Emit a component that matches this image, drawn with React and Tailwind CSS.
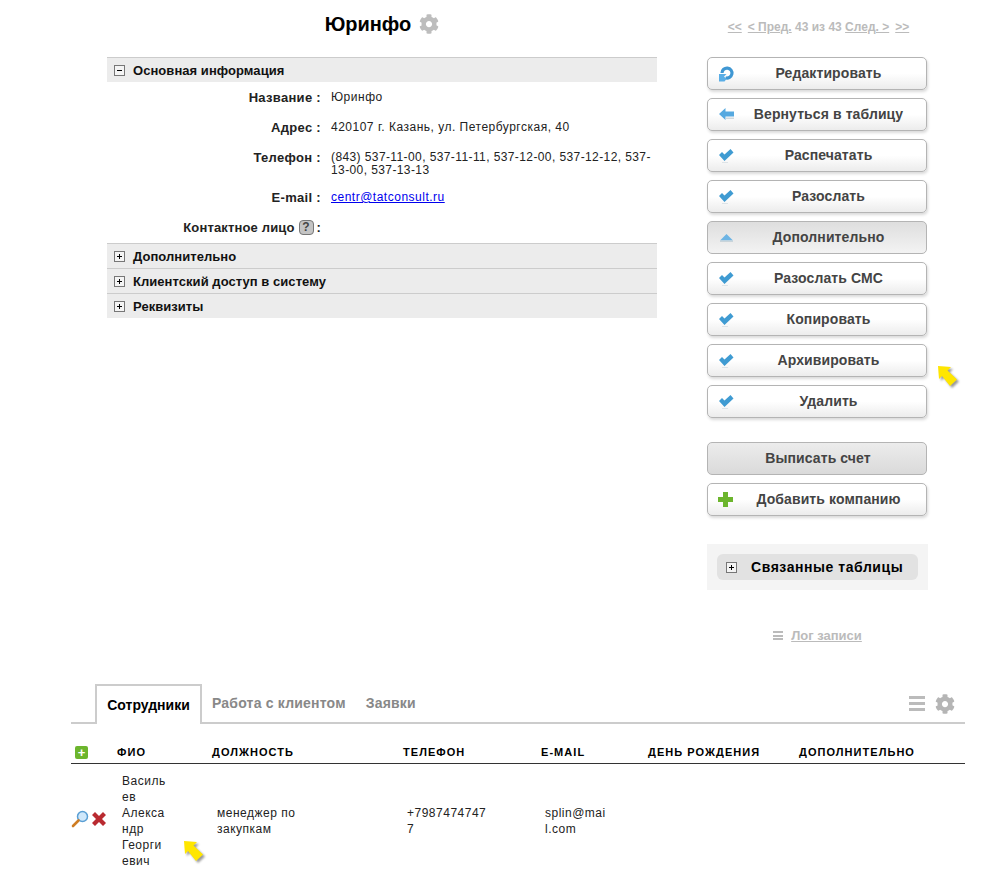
import React from "react";
import { FaCog } from "react-icons/fa";

const sections = ["Дополнительно", "Клиентский доступ в систему", "Реквизиты"];

const actions = [
  { label: "Редактировать", icon: "refresh" },
  { label: "Вернуться в таблицу", icon: "back" },
  { label: "Распечатать", icon: "check" },
  { label: "Разослать", icon: "check" },
  { label: "Дополнительно", icon: "up", pressed: true },
  { label: "Разослать СМС", icon: "check" },
  { label: "Копировать", icon: "check" },
  { label: "Архивировать", icon: "check", hint: true },
  { label: "Удалить", icon: "check" },
];

const columns = [
  { label: "ФИО", width: "w-[95px]" },
  { label: "Должность", width: "w-[191px]" },
  { label: "Телефон", width: "w-[138px]" },
  { label: "E-mail", width: "w-[107px]" },
  { label: "День рождения", width: "w-[151px]" },
  { label: "Дополнительно", width: "" },
];

const Toggle = ({ open }) => (
  <span className="relative block w-[11px] h-[11px] border border-[#777] bg-[#f4f4f4] shrink-0">
    <span className="absolute left-[2px] top-[4px] w-[5px] h-px bg-black" />
    {!open && <span className="absolute left-[4px] top-[2px] w-px h-[5px] bg-black" />}
  </span>
);

const SectionHead = ({ title, open }) => (
  <div className="flex items-center h-[25px] pl-[7px] border-t border-[#ccc] bg-[#ececec]">
    <Toggle open={open} />
    <span className="ml-[8px] pt-px text-[13px] font-bold text-[#111] tracking-[0.05px]">{title}</span>
  </div>
);

const Field = ({ label, children, help }) => (
  <div className="flex min-h-[30px] pt-[9px] pb-[5px] leading-[13px]">
    <div
      className={`w-[214px] shrink-0 text-right text-[13px] font-bold text-[#222] flex justify-end items-center h-[13px] ${
        help ? "tracking-[0.15px]" : "tracking-[0.3px]"
      }`}
    >
      {label}
      {help && (
        <span className="ml-[4px] mr-[3px] w-[15px] h-[15px] rounded-[4px] border border-[#777] bg-[#c4c4c4] text-[#444] text-[12px] flex items-center justify-center">
          ?
        </span>
      )}
      {!help && <span>&nbsp;</span>}:
    </div>
    <div className="ml-[10px] w-[326px] text-[12px] tracking-[0.5px] text-[#222]">{children}</div>
  </div>
);

const ActionIcon = ({ name }) => {
  if (name === "refresh") {
    return (
      <svg width="16" height="16" viewBox="0 0 16 16">
        <path d="M3 7a5 5 0 1 1 3.500 4.800" fill="none" stroke="#3f97d3" strokeWidth="3.200" />
        <path d="M0 15.500V8h7.500L5 10.500l2.500 2.500-2 2.500z" fill="#5aaee6" />
      </svg>
    );
  }
  if (name === "back") {
    return (
      <svg width="15" height="14" viewBox="0 0 15 14">
        <path d="M0 6 6.500 0v3.500H15v5H6.500V12z" fill="#56a9e0" />
        <path d="M6.500 9.500H15V11H6.500z" fill="#cfd8de" />
      </svg>
    );
  }
  if (name === "up") {
    return (
      <svg width="15" height="10" viewBox="0 0 15 10">
        <path d="M7.500 1l6.500 6.500H1z" fill="#6db4e4" />
        <path d="M1 7.500h13V9H1z" fill="#c9d4da" />
      </svg>
    );
  }
  if (name === "plus") {
    return (
      <svg className="-ml-[1px]" width="15" height="15" viewBox="0 0 15 15">
        <path d="M5 0h5v5h5v5h-5v5H5v-5H0V5h5z" fill="#6cb52d" />
      </svg>
    );
  }
  return (
    <svg width="15" height="14" viewBox="0 0 15 14">
      <path d="M0 6l3-3 2.500 2.500L11.500 0l3 3.500-9 8.500z" fill="#3f9bd2" />
      <path d="M3 13h6v1H3z" fill="#dde3e7" />
    </svg>
  );
};

const YellowArrow = ({ className }) => (
  <svg
    className={`drop-shadow-[2px_2px_1px_rgba(0,0,0,0.4)] ${className}`}
    width="22"
    height="24"
    viewBox="0 0 22 24"
  >
    <path d="M1 1l13 1-3.500 3.500L20 14.500 13 21 5 11 2 14z" fill="#ffe600" />
  </svg>
);

const ActionButton = ({ label, icon, tone = "plain", hint }) => {
  const tones = {
    plain: "bg-gradient-to-b from-white from-50% to-[#ececec] shadow-[1px_2px_3px_rgba(0,0,0,0.15)]",
    pressed: "bg-gradient-to-b from-[#dedede] to-[#f3f3f3]",
    flat: "bg-gradient-to-b from-[#ececec] to-[#dadada]",
  };
  return (
    <div className="relative">
      <button
        className={`relative flex items-center justify-center w-[220px] h-[33px] rounded-[5px] border border-[#b4b4b4] text-[14px] font-bold tracking-[0.1px] text-[#444] ${
          icon ? "pl-[23px]" : "pl-[2px]"
        } ${tones[tone]}`}
      >
        {icon && (
          <span className="absolute left-[11px] top-0 bottom-0 flex items-center">
            <ActionIcon name={icon} />
          </span>
        )}
        {label}
      </button>
      {hint && <YellowArrow className="absolute left-[230px] top-[21px]" />}
    </div>
  );
};

const Bars = ({ size, bar }) => (
  <span className={`flex flex-col justify-between ${size}`}>
    <span className={`${bar} bg-[#bbb]`} />
    <span className={`${bar} bg-[#bbb]`} />
    <span className={`${bar} bg-[#bbb]`} />
  </span>
);

export default function App() {
  return (
    <div className="relative h-[878px] overflow-hidden bg-white font-['Liberation_Sans',Arial,sans-serif] text-[12px]">
      <div className="flex pl-[107px]">
        <div className="w-[550px]">
          <div className="flex items-center justify-center h-[57px] pb-[10px]">
            <h1 className="text-[20px] font-bold text-black">Юринфо</h1>
            <FaCog className="ml-[8px] text-[#bdbdbd] text-[20px]" />
          </div>
          <SectionHead title="Основная информация" open />
          <Field label="Название">Юринфо</Field>
          <Field label="Адрес">420107 г. Казань, ул. Петербургская, 40</Field>
          <Field label="Телефон">
            <span className="tracking-[0.4px]">
              (843) 537-11-00, 537-11-11, 537-12-00, 537-12-12, 537-
              <br />
              13-00, 537-13-13
            </span>
          </Field>
          <Field label="E-mail">
            <a href="#" className="text-[#0000ee] underline">
              centr@tatconsult.ru
            </a>
          </Field>
          <Field label="Контактное лицо" help />
          <div className="h-px" />
          {sections.map((s) => (
            <SectionHead key={s} title={s} />
          ))}
        </div>

        <div className="ml-[50px] w-[221px]">
          <div className="flex justify-center gap-[6px] h-[57px] pt-[18px] pl-[2px] text-[12px] font-bold text-[#bbb]">
            <span className="underline">&lt;&lt;</span>
            <span>
              <span className="underline">&lt; Пред.</span> 43 из 43{" "}
              <span className="underline">След. &gt;</span>
            </span>
            <span className="underline">&gt;&gt;</span>
          </div>
          <div className="flex flex-col gap-[8px]">
            {actions.map((a) => (
              <ActionButton
                key={a.label}
                label={a.label}
                icon={a.icon}
                tone={a.pressed ? "pressed" : "plain"}
                hint={a.hint}
              />
            ))}
          </div>
          <div className="flex flex-col gap-[8px] mt-[24px]">
            <ActionButton label="Выписать счет" tone="flat" />
            <ActionButton label="Добавить компанию" icon="plus" />
          </div>
          <div className="mt-[28px] h-[46px] px-[10px] py-[10px] bg-[#f4f4f4]">
            <div className="flex items-center h-[26px] pl-[9px] rounded-[6px] bg-[#e2e2e2]">
              <Toggle />
              <span className="ml-[14px] text-[14px] font-bold text-black tracking-[0.55px]">
                Связанные таблицы
              </span>
            </div>
          </div>
          <div className="flex items-center justify-center gap-[8px] mt-[36px] text-[13px] font-bold text-[#bbb]">
            <Bars size="w-[10px] h-[9px]" bar="h-[2px]" />
            <span className="underline">Лог записи</span>
          </div>
        </div>
      </div>

      <div className="mt-[38px] mx-[71px] w-[894px]">
        <div className="flex items-end h-[40px] border-b-2 border-[#ccc] relative">
          <div className="ml-[24px] w-[107px] h-[40px] -mb-[2px] border-2 border-b-0 border-[#ccc] bg-white flex items-center justify-center pt-[2px] text-[14px] font-bold text-black z-10">
            Сотрудники
          </div>
          <span className="ml-[10px] mb-[8px] text-[14px] font-bold tracking-[0.2px] text-[#888]">
            Работа с клиентом
          </span>
          <span className="ml-[20px] mb-[8px] text-[14px] font-bold tracking-[0.2px] text-[#888]">
            Заявки
          </span>
          <span className="ml-auto mb-[8px] mr-[10px] flex items-center gap-[10px]">
            <Bars size="w-[16px] h-[15px]" bar="h-[3px]" />
            <FaCog className="text-[#b5b5b5] text-[20px]" />
          </span>
        </div>

        <div className="flex items-center h-[40px] pt-[18px] border-b border-[#333]">
          <span className="w-[46px] pl-[4px]">
            <span className="flex items-center justify-center w-[13px] h-[13px] rounded-[2px] bg-[#6cb52d] text-white text-[13px] font-bold leading-none">
              +
            </span>
          </span>
          {columns.map((c) => (
            <span
              key={c.label}
              className={`text-[11px] font-bold uppercase tracking-[1.05px] text-black ${c.width}`}
            >
              {c.label}
            </span>
          ))}
        </div>

        <div className="flex items-center pt-[9px] text-[12px] tracking-[0.5px] leading-[16px] text-[#222] relative">
          <span className="flex items-center w-[46px] gap-[3px] pb-[4px]">
            <svg width="18" height="18" viewBox="0 0 18 18">
              <circle cx="11.500" cy="6.500" r="5" fill="#cfe8fb" stroke="#5a9fd4" strokeWidth="1.500" />
              <path d="M7.500 10.500l-5.500 5.500" stroke="#cf7d22" strokeWidth="2.600" strokeLinecap="round" />
            </svg>
            <svg width="14" height="14" viewBox="0 0 14 14">
              <path d="M0 3 3 0l4 4 4-4 3 3-4 4 4 4-3 3-4-4-4 4-3-3 4-4z" fill="#b92a30" />
            </svg>
          </span>
          <span className="w-[95px] pl-[5px]">
            <span className="block w-[46px] break-words">Васильев Александр Георгиевич</span>
          </span>
          <span className="w-[191px] pl-[5px]">
            <span className="block w-[100px]">менеджер по закупкам</span>
          </span>
          <span className="w-[138px] pl-[4px]">
            <span className="block w-[80px] break-all">+79874747477</span>
          </span>
          <span className="w-[107px] pl-[4px]">
            <span className="block w-[62px] break-all">splin@mail.com</span>
          </span>
          <YellowArrow className="absolute left-[112px] top-[76px]" />
        </div>
      </div>
    </div>
  );
}
